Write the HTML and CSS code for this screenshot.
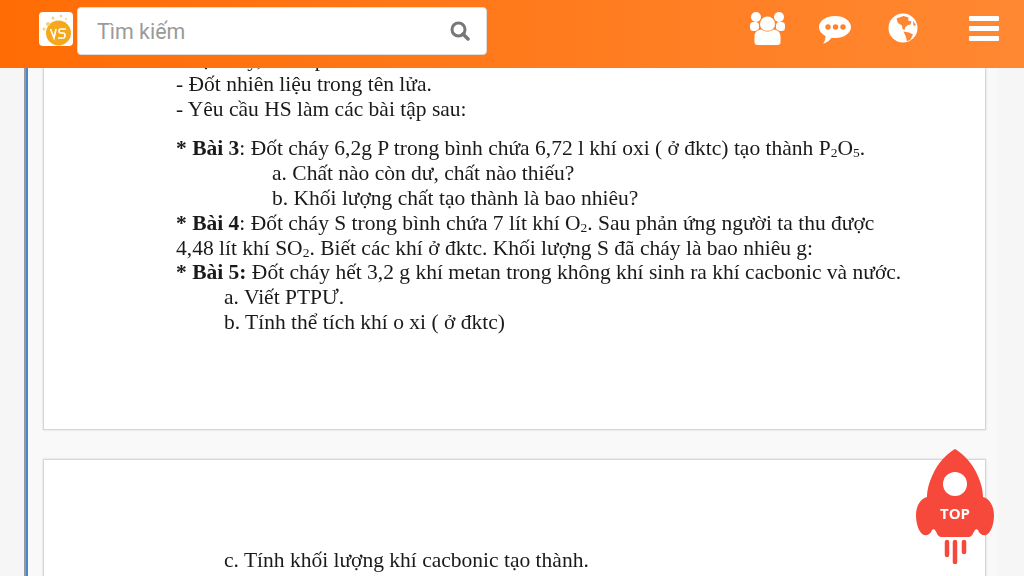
FILE: index.html
```html
<!DOCTYPE html>
<html lang="en">
<head>
	<meta charset="utf-8" />
	<meta name="viewport" content="width=device-width, initial-scale=1" />
	<title>Tìm kiếm</title>
	<link rel="stylesheet" href="styles.css">
</head>
<body>
	<header class="topbar">
		<div class="logo">
			<svg viewBox="0 0 34 34" width="34" height="34">
				<circle cx="19.500" cy="21" r="12.500" fill="#f5a81c" />
				<circle cx="9" cy="12" r="2" fill="#f8cf7a" />
				<circle cx="14" cy="6" r="1.500" fill="#f8cf7a" />
				<circle cx="5" cy="17" r="1.500" fill="#f8cf7a" />
				<circle cx="22" cy="4" r="1.200" fill="#f8cf7a" />
				<circle cx="27" cy="7" r="1" fill="#f8cf7a" />
				<path d="M11.500 17l3.500 9 2-9" fill="none" stroke="#fff" stroke-width="1.600" />
				<path d="M27 17h-5q-2 0-2 2t2 2h2q2 0 2 2.500t-2 2.500h-5" fill="none" stroke="#fff" stroke-width="1.600" />
			</svg>
		</div>
		<form class="search">
			<input type="text" placeholder="Tìm kiếm" />
			<svg viewBox="0 0 20 20" width="20" height="20">
				<circle cx="8.500" cy="8.500" r="6.500" fill="none" stroke="#777" stroke-width="3" />
				<path d="M13 13l5 5" stroke="#777" stroke-width="3.500" stroke-linecap="round" />
			</svg>
		</form>
		<nav class="actions">
			<svg class="icon-users" viewBox="0 0 37 35" width="37" height="35" fill="#fff">
				<circle cx="7" cy="6" r="5" />
				<circle cx="30" cy="6" r="5" />
				<rect x="1" y="11" width="9" height="9" rx="3.500" />
				<rect x="27" y="11" width="9" height="9" rx="3.500" />
				<g stroke="#ff8630" stroke-width="1.500" paint-order="stroke">
					<circle cx="18.500" cy="13" r="7.500" />
					<path d="M5.500 31v-5c0-5 3-7 7-7.500 2 1.500 4 2 6 2s4-.5 6-2c4 .5 7 2.500 7 7.500v5q0 3-3 3h-20q-3 0-3-3z" />
				</g>
			</svg>
			<svg class="icon-chat" viewBox="0 0 32 28" width="32" height="28" fill="#fff">
				<path fill-rule="evenodd" d="M16 0c8.800 0 16 4.900 16 11s-7.200 11-16 11c-1.200 0-2.300-.1-3.400-.3-2 2.800-5 5-8.600 6 1.600-2 2.400-4 2.600-7.700C2.600 18 0 14.700 0 11 0 4.900 7.200 0 16 0zM9 8.300a2.700 2.700 0 1 0 0 5.400 2.700 2.700 0 0 0 0-5.400zm7.500 0a2.700 2.700 0 1 0 0 5.400 2.700 2.700 0 0 0 0-5.400zm7.500 0a2.700 2.700 0 1 0 0 5.400 2.700 2.700 0 0 0 0-5.400z" />
			</svg>
			<svg class="icon-globe" viewBox="0 0 30 30" width="30" height="30">
				<circle cx="15" cy="15" r="14.500" fill="#fff" />
				<path d="M8.500 5.500l7-2.500 5 1.500-.5 3 3.500 1-1 3-2.500.5-2.500 2-1 3-2-1-.5-3.500-4-2.500z" fill="#ff8630" />
				<path d="M15.500 18.500l5.500 1 4 2-2.500 5-3.500 2-1-4.500z" fill="#ff8630" />
				<path d="M25 8l3 4-2.500 1z" fill="#ff8630" />
			</svg>
			<div class="bars"><span></span><span></span><span></span></div>
		</nav>
	</header>

	<div class="page">
		<section class="card card-first">
			<p class="line">- Sự cháy, hô hấp.</p>
			<p class="line">- Đốt nhiên liệu trong tên lửa.</p>
			<p class="line">- Yêu cầu HS làm các bài tập sau:</p>
			<p class="line gap"><b>* Bài 3</b>: Đốt cháy 6,2g P trong bình chứa 6,72 l khí oxi ( ở đktc) tạo thành P<sub>2</sub>O<sub>5</sub>.</p>
			<p class="line deep">a. Chất nào còn dư, chất nào thiếu?</p>
			<p class="line deep">b. Khối lượng chất tạo thành là bao nhiêu?</p>
			<p class="line"><b>* Bài 4</b>: Đốt cháy S trong bình chứa 7 lít khí O<sub>2</sub>. Sau phản ứng người ta thu được</p>
			<p class="line">4,48 lít khí SO<sub>2</sub>. Biết các khí ở đktc. Khối lượng S đã cháy là bao nhiêu g:</p>
			<p class="line"><b>* Bài 5:</b> Đốt cháy hết 3,2 g khí metan trong không khí sinh ra khí cacbonic và nước.</p>
			<p class="line mid">a. Viết PTPƯ.</p>
			<p class="line mid">b. Tính thể tích khí o xi ( ở đktc)</p>
		</section>
		<section class="card card-second">
			<p class="line mid">c. Tính khối lượng khí cacbonic tạo thành.</p>
			<p class="line mid">d. Khối lượng nước tạo thành.</p>
		</section>
	</div>

	<a class="to-top" href="#">
		<svg viewBox="0 0 80 116" width="80" height="116">
			<path fill="#f6483b" d="M40 1c5 3 14 10 20 21 5 9 8 19 8 27 6 1 11 9 11 18 0 9-3 18-8 20-3 1-7-1-8-5-1-1-2-1-3 0-2 3-3 7-6 7h-28c-3 0-4-4-6-7-1-1-2-1-3 0-1 4-5 6-8 5-5-2-8-11-8-20 0-9 5-17 11-18 0-8 3-18 8-27 6-11 15-18 20-21z" />
			<circle cx="40" cy="36" r="12" fill="#fff" />
			<path d="M32 94v13M40 94v20M49 94v10" stroke="#f6483b" stroke-width="4.500" stroke-linecap="round" />
			<text x="40" y="71" text-anchor="middle" class="top-label">TOP</text>
		</svg>
	</a>
</body>
</html>
```

FILE: styles.css
```css
* {
	box-sizing: border-box;
}
body {
	margin: 0;
	height: 576px;
	overflow: hidden;
	display: flex;
	padding: 0 26px 0 24px;
	background-color: #f6f6f6;
	font-family: "Liberation Serif", serif;
}

/* Header sits over the scrolled page */
.topbar {
	position: fixed;
	top: 0;
	left: 0;
	right: 0;
	z-index: 2;
	height: 68px;
	display: flex;
	align-items: center;
	padding: 0 25px 6px 39px;
	background: linear-gradient(to right, #ff6c05, #ff8832);
}
.logo {
	width: 34px;
	height: 34px;
	margin-bottom: 4px;
	background-color: #fff;
	border-radius: 4px;
}
.logo svg {
	display: block;
}
.search {
	width: 410px;
	height: 48px;
	margin: 0 0 0 4px;
	display: flex;
	align-items: center;
	padding: 0 16px 0 19px;
	background-color: #fff;
	border: 1px solid #ddd;
	border-radius: 4px;
}
.search input {
	flex: 1;
	min-width: 0;
	border: 0;
	padding: 0;
	outline: none;
	font-family: "Roboto", sans-serif;
	font-size: 21.400px;
}
.search input::placeholder {
	color: #9a9a9a;
	opacity: 1;
}
.actions {
	margin-left: auto;
	margin-bottom: 6px;
	display: flex;
	align-items: center;
}
.icon-users {
	margin-right: 33px;
}
.icon-chat {
	margin-top: 4px;
	margin-right: 37px;
}
.icon-globe {
	margin-right: 51px;
}
.bars {
	width: 30px;
	display: flex;
	flex-direction: column;
	gap: 5px;
}
.bars span {
	height: 5px;
	background-color: #fff;
	border-radius: 1px;
}

.page {
	flex: 1;
	min-width: 0;
	display: flex;
	flex-direction: column;
	gap: 29px;
	padding: 0 12px 0 17px;
	background-color: #f9f9f9;
	border-left: 2px solid #999;
	position: relative;
}
.page::before {
	content: "";
	position: absolute;
	left: 0;
	top: 0;
	bottom: 0;
	width: 2px;
	background-color: #4a86d0;
}
.card {
	flex: none;
	padding-left: 132px;
	background-color: #fff;
	border: 1px solid #d3d6da;
	box-shadow: 0 0 2px #d3d6da;
	color: #1a1a1a;
	filter: blur(0.4px);
}
.card-first {
	height: 430px;
	padding-top: 47px;
	border-top: 0;
}
.card-second {
	height: 160px;
	padding-top: 88px;
}
.line {
	margin: 0;
	height: 24.800px;
	font-size: 21.500px;
	line-height: 24.800px;
	white-space: nowrap;
}
.line sub {
	font-size: 13.500px;
	line-height: 0;
	vertical-align: -2px;
}
.gap {
	margin-top: 15px;
}
.deep {
	margin-left: 96px;
}
.mid {
	margin-left: 48px;
}

.to-top {
	position: fixed;
	left: 915px;
	top: 448px;
	z-index: 3;
}
.to-top svg {
	display: block;
}
.top-label {
	font-family: "Open Sans", sans-serif;
	font-size: 15px;
	font-weight: 700;
	fill: #fff;
}
```
